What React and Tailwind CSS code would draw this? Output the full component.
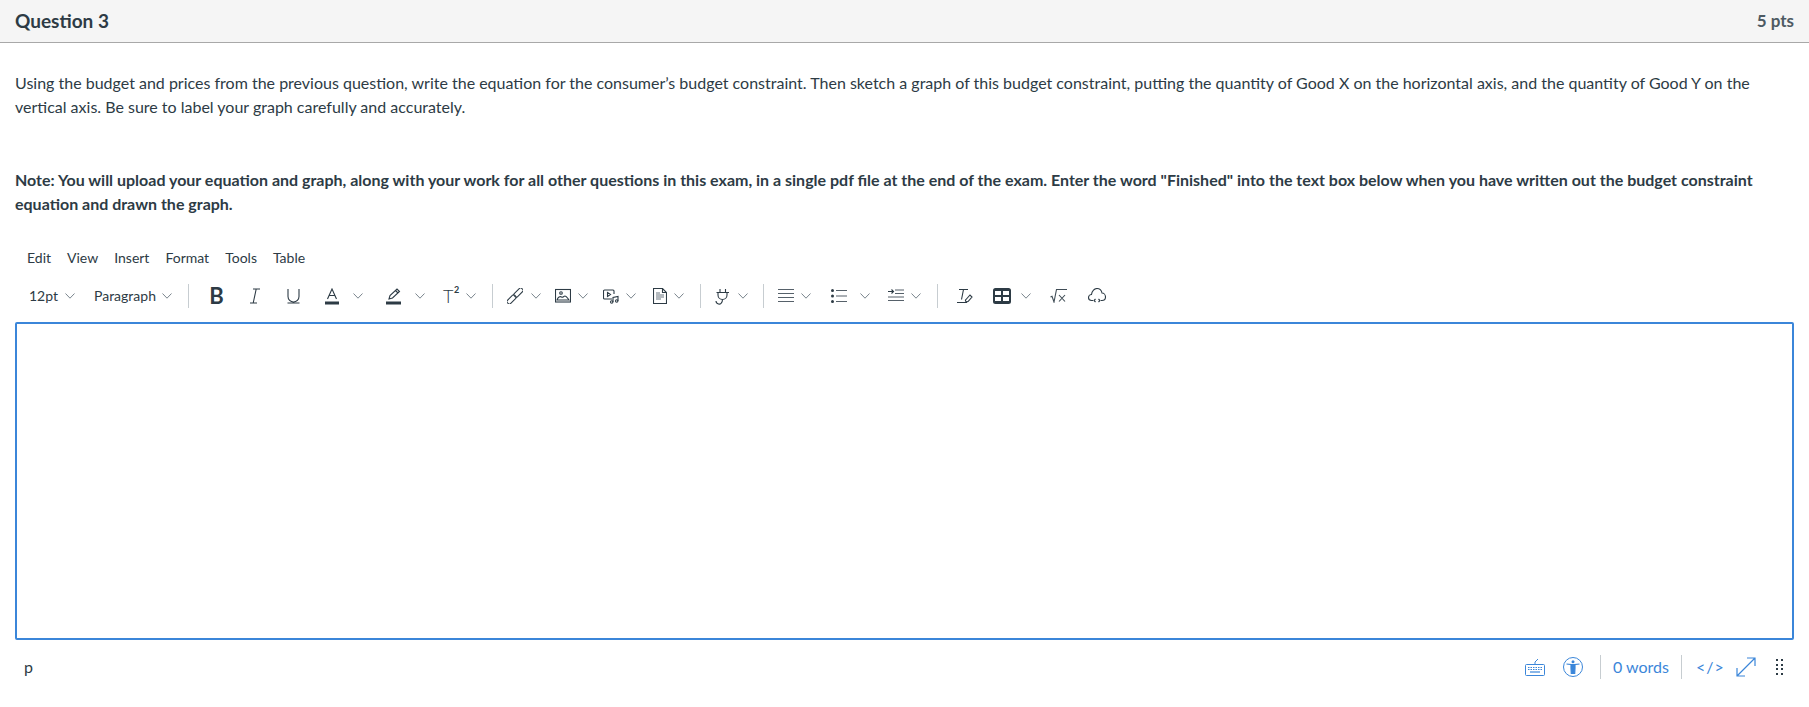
import React from "react";

const Chevron = ({ className = "" }) => (
  <svg viewBox="0 0 10 6" className={`w-[10px] h-[6px] shrink-0 ${className}`} fill="none" stroke="#6b7780" strokeWidth="0.9">
    <path d="M0.5 0.5 5 5.2 9.5 0.5" />
  </svg>
);

const Divider = ({ className = "" }) => <div className={`w-px h-[24px] shrink-0 bg-[#c7cdd1] ${className}`} />;

const Icon = ({ children, className = "", size = "w-[16px] h-[16px]", view = "0 0 16 16" }) => (
  <svg viewBox={view} className={`shrink-0 ${size} ${className}`} fill="none" stroke="#2d3b45" strokeWidth="1.100">
    {children}
  </svg>
);

const menus = ["Edit", "View", "Insert", "Format", "Tools", "Table"];

const Toolbar = () => (
  <div className="flex items-center h-[26px] pl-[29px] text-[14px] text-[#2d3b45] leading-none">
    <span className="w-[29px]">12pt</span>
    <Chevron className="ml-[7px]" />
    <span className="ml-[19px] w-[61px]">Paragraph</span>
    <Chevron className="ml-[7px]" />
    <Divider className="ml-[16px]" />

    <span className="ml-[20px] w-[15px] text-[22px] font-bold leading-none text-center">B</span>
    <Icon className="ml-[25px]" size="w-[12px] h-[16px]" view="0 0 12 16">
      <path d="M4 1h7M1 15h7M7.200 1 4.200 15" />
    </Icon>
    <Icon className="ml-[26px]" size="w-[13px] h-[16px]" view="0 0 13 16">
      <path d="M1 1v7.500a5.500 5.500 0 0 0 11 0V1M0.500 15h12" />
    </Icon>
    <Icon className="ml-[25px]" size="w-[14px] h-[17px]" view="0 0 14 17">
      <path d="M2.500 11 7 1l4.500 10M4 7.500h6" />
      <rect x="0" y="13.500" width="14" height="3" fill="#2d3b45" stroke="none" />
    </Icon>
    <Chevron className="ml-[14px]" />
    <Icon className="ml-[23px]" size="w-[15px] h-[17px]" view="0 0 15 17">
      <path d="M3 11 4 7.500 11 1l2.500 2.500L6.500 10 3 11ZM9.500 2.500l2.500 2.500" />
      <rect x="0" y="13.500" width="15" height="3" fill="#2d3b45" stroke="none" />
    </Icon>
    <Chevron className="ml-[14px]" />
    <span className="ml-[18px] w-[16px] text-[18px] font-light leading-none relative">
      T<span className="absolute left-[11px] top-[-2px] text-[9px] font-bold">2</span>
    </span>
    <Chevron className="ml-[7px]" />
    <Divider className="ml-[16px]" />

    <Icon className="ml-[14px]">
      <rect x="-0.700" y="9.250" width="10.500" height="4.500" rx="1.500" strokeWidth="1" transform="rotate(-45 4.500 11.500)" />
      <rect x="6.200" y="2.250" width="10.500" height="4.500" rx="1.500" strokeWidth="1" transform="rotate(-45 11.500 4.500)" />
    </Icon>
    <Chevron className="ml-[8px]" />
    <Icon className="ml-[14px]">
      <rect x="0.500" y="1.500" width="15" height="12.500" />
      <circle cx="6" cy="5" r="1.300" />
      <path d="M2 12c1-3 3-4 4.500-3 1.500 1 2-1 3.500-1s2.500 2 4 4H2Z" />
    </Icon>
    <Chevron className="ml-[7px]" />
    <Icon className="ml-[15px]">
      <path d="M9 11H1.500a1 1 0 0 1-1-1V3a1 1 0 0 1 1-1H10a1 1 0 0 1 1 1v3M4.500 4.500l3 2-3 2v-4Z" />
      <path d="M10 14V9.500l5-1V13" />
      <circle cx="8.700" cy="14" r="1.200" />
      <circle cx="13.700" cy="13" r="1.200" />
    </Icon>
    <Chevron className="ml-[7px]" />
    <Icon className="ml-[17px]" size="w-[14px] h-[16px]" view="0 0 14 16">
      <path d="M0.500 0.500H9.500L13.500 4.500V15.500H0.500ZM9.500 0.500V4.500H13.500" />
      <path d="M3 5h4M3 7h8M3 9h8M3 11h5" stroke="#6b7780" />
    </Icon>
    <Chevron className="ml-[7px]" />
    <Divider className="ml-[16px]" />

    <Icon className="ml-[14px]" size="w-[15px] h-[17px]" view="0 0 15 17">
      <path d="M5 1v3.500M10.500 1v3.500M1.500 4.500h12.500M3 4.500v2.500a4.500 4.500 0 0 0 9 0V4.500M7.500 11.500c0 3-2 5-4 4.500-2-.5-2.500-2-2.500-3" />
    </Icon>
    <Chevron className="ml-[8px]" />
    <Divider className="ml-[15px]" />

    <Icon className="ml-[14px]">
      <path d="M0 1.500h16M0 5.500h16M0 9.500h16M0 13.500h16" stroke="#56616a" strokeWidth="1.100" />
    </Icon>
    <Chevron className="ml-[7px]" />
    <Icon className="ml-[20px]">
      <circle cx="1.500" cy="2.500" r="1.500" fill="#2d3b45" stroke="none" />
      <circle cx="1.500" cy="8" r="1.500" fill="#2d3b45" stroke="none" />
      <circle cx="1.500" cy="13.500" r="1.500" fill="#2d3b45" stroke="none" />
      <path d="M5 2.500h11M5 8h11M5 13.500h11" stroke="#56616a" />
    </Icon>
    <Chevron className="ml-[13px]" />
    <Icon className="ml-[18px]">
      <path d="M0 3.500h5M3.500 1.500l2 2-2 2" />
      <path d="M7 2h9M7 5.500h9M0 9h16M0 12.500h16" stroke="#56616a" />
    </Icon>
    <Chevron className="ml-[7px]" />
    <Divider className="ml-[16px]" />

    <Icon className="ml-[19px]">
      <path d="M2 1.500h9M6.500 1.500 4.500 11.500M0 14.500h10" />
      <path d="M9 11.500 13 7l2 2-4 4.500c-1 .5-2 .2-2.500-.3-.2-.5 0-1.200.5-1.700Z" />
    </Icon>
    <svg viewBox="0 0 18 16" className="ml-[20px] w-[18px] h-[16px] shrink-0">
      <path fillRule="evenodd" fill="#2d3b45" d="M2.500 0h13A2.500 2.500 0 0 1 18 2.500v11a2.500 2.500 0 0 1-2.500 2.500h-13A2.500 2.500 0 0 1 0 13.500v-11A2.500 2.500 0 0 1 2.500 0ZM2 3v4h6V3H2Zm8 0v4h6V3h-6ZM2 9v4h6V9H2Zm8 0v4h6V9h-6Z" />
    </svg>
    <Chevron className="ml-[10px]" />
    <Icon className="ml-[19px]" size="w-[17px] h-[14px]" view="0 0 17 14">
      <path d="M0.500 8 2 7.300 4 13 6.500 0.500H17M9 6l6 6.500M15 6l-6 6.500" stroke="#3f4c55" />
    </Icon>
    <Icon className="ml-[21px]" size="w-[18px] h-[16px]" view="0 0 18 16">
      <path d="M5 12.500H3.500C1.500 12.500 0.500 11 0.500 9.500S2 6.500 3.500 6.500C4 3 6.500 0.500 9 0.500s4.500 2 5 4.500c2 0 3.500 2 3.500 4s-1.500 3.500-3.500 3.500H13" />
      <path d="M7.500 11 6 12.500 7.500 14M10.500 11l1.500 1.500-1.500 1.500" />
    </Icon>
  </div>
);

const StatusBar = () => (
  <div className="flex items-center h-[24px] mt-[15px] pl-[9px] pr-[11px]">
    <span className="text-[16px] text-[#2d3b45] leading-none">p</span>
    <div className="ml-auto flex items-center text-[#3b86d9]">
      <svg viewBox="0 0 20 18" className="w-[20px] h-[18px]" fill="none" stroke="#3b86d9" strokeWidth="1">
        <rect x="0.500" y="6.500" width="19" height="11" rx="1" />
        <path d="M10 6.500V4l3-3" />
        <path d="M3 9.500h14M3 11.500h14" stroke="#3b86d9" strokeWidth="1.200" strokeDasharray="1.500 1" />
        <path d="M5 14h10" strokeWidth="1.200" />
      </svg>
      <svg viewBox="0 0 20 20" className="ml-[18px] w-[20px] h-[20px]" fill="none" stroke="#3b86d9" strokeWidth="1">
        <circle cx="10" cy="10" r="9.500" />
        <circle cx="10" cy="4.700" r="1.500" fill="#3b86d9" stroke="none" />
        <path d="M3.500 7 8 7.500v3.500L8.300 16.500h3.400L12 11V7.500L16.500 7" fill="#3b86d9" strokeWidth="1.200" />
      </svg>
      <div className="ml-[17px] w-px h-[24px] bg-[#c7cdd1]" />
      <span className="ml-[12px] text-[16px] leading-none w-[57px]">0 words</span>
      <div className="ml-[11px] w-px h-[24px] bg-[#c7cdd1]" />
      <span className="ml-[14px] w-[25px] text-[16px] leading-none tracking-[1px] whitespace-nowrap">&lt;/&gt;</span>
      <svg viewBox="0 0 20 20" className="ml-[15px] w-[20px] h-[20px]" fill="none" stroke="#3b86d9" strokeWidth="1.200">
        <path d="M1 19 19 1M11 1h8v8M1 11v8h8" />
      </svg>
      <svg viewBox="0 0 7 16" className="ml-[20px] w-[7px] h-[16px]" fill="#2d3b45">
        <rect x="0" y="0" width="2" height="2" /><rect x="5" y="0" width="2" height="2" />
        <rect x="0" y="5" width="2" height="2" /><rect x="5" y="5" width="2" height="2" />
        <rect x="0" y="9" width="2" height="2" /><rect x="5" y="9" width="2" height="2" />
        <rect x="0" y="14" width="2" height="2" /><rect x="5" y="14" width="2" height="2" />
      </svg>
    </div>
  </div>
);

export default function App() {
  return (
    <div className="w-[1809px] h-[707px] bg-white overflow-hidden text-[#2d3b45] font-['Lato','sans-serif']">
      <header className="h-[43px] bg-[#f5f5f5] border-b border-[#a8a8a8] flex items-center justify-between pl-[15px] pr-[15px]">
        <h2 className="text-[19px] font-bold">Question 3</h2>
        <span className="text-[17px] font-bold text-[#4d5a63]">5 pts</span>
      </header>

      <section className="px-[15px] pt-[28px]">
        <p className="text-[16px] leading-[24px]">
          Using the budget and prices from the previous question, write the equation for the consumer’s budget constraint. Then sketch a graph of this budget constraint, putting the quantity of Good X on the horizontal axis, and the quantity of Good Y on the vertical axis. Be sure to label your graph carefully and accurately.
        </p>
        <p className="mt-[49px] text-[16px] leading-[24px] font-bold">
          Note: You will upload your equation and graph, along with your work for all other questions in this exam, in a single pdf file at the end of the exam. Enter the word "Finished" into the text box below when you have written out the budget constraint equation and drawn the graph.
        </p>

        <nav className="mt-[29px] flex items-center gap-[16px] pl-[12px] h-[24px] text-[14px]">
          {menus.map((m) => (
            <span key={m}>{m}</span>
          ))}
        </nav>
      </section>

      <div className="mt-[14px]">
        <Toolbar />
      </div>

      <div className="px-[15px] mt-[13px]">
        <div className="h-[318px] border-2 border-[#3b86d9] rounded-[2px]" />
        <StatusBar />
      </div>
    </div>
  );
}
